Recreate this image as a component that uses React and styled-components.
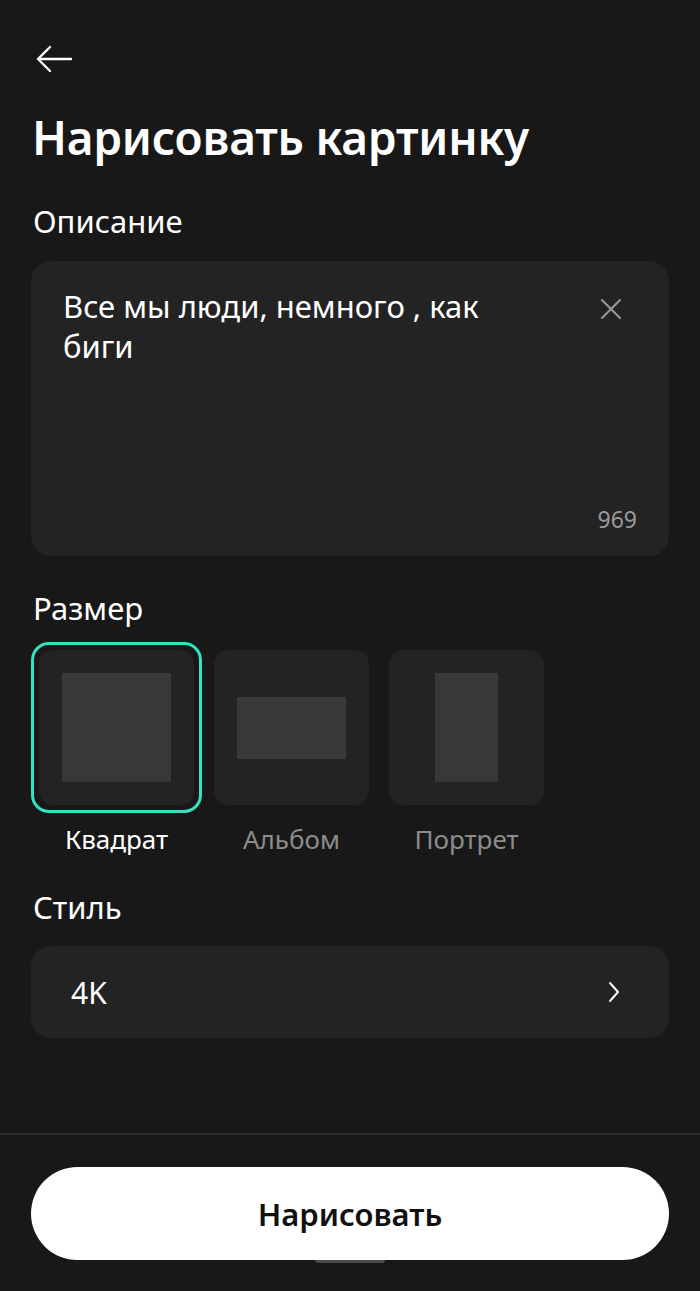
import styled, { createGlobalStyle } from "styled-components";

const Global = createGlobalStyle`
    body{
        margin: 0;
        background-color: #181818;
        font-family: "Noto Sans", "Open Sans", sans-serif;
        color: #fff;
    }
`

const sizes = [
    { id: "square", label: "Квадрат", w: 109, h: 109 },
    { id: "album", label: "Альбом", w: 109, h: 62 },
    { id: "portrait", label: "Портрет", w: 63, h: 109 },
]

function App(){
    const selected = "square";

    return(
    <>
    <Global/>
    <Page>
        <Content>
            <BackButton>
                <svg width="38" height="30" viewBox="0 0 38 30" fill="none">
                    <path d="M36 15H3M15 3L3 15L15 27" stroke="#fff" strokeWidth="2.4" strokeLinecap="round" strokeLinejoin="round"/>
                </svg>
            </BackButton>
            <Title>Нарисовать картинку</Title>

            <Label $top={34} $bottom={20}>Описание</Label>
            <TextCard>
                <TextRow>
                    <Prompt>Все мы люди, немного , как биги</Prompt>
                    <ClearButton>
                        <svg width="22" height="22" viewBox="0 0 22 22" fill="none">
                            <path d="M2 2L20 20M20 2L2 20" stroke="#9a9a9a" strokeWidth="2" strokeLinecap="round"/>
                        </svg>
                    </ClearButton>
                </TextRow>
                <Counter>969</Counter>
            </TextCard>

            <Label $top={32} $bottom={14}>Размер</Label>
            <Sizes>
                {sizes.map(item=>{
                    return(
                        <SizeItem key={item.id}>
                            <Cell $active={item.id===selected}>
                                <Tile>
                                    <Shape style={{width:item.w, height:item.h}}/>
                                </Tile>
                            </Cell>
                            <SizeLabel $active={item.id===selected}>{item.label}</SizeLabel>
                        </SizeItem>
                    )
                })}
            </Sizes>

            <Label $top={31} $bottom={19}>Стиль</Label>
            <StyleRow>
                <span>4K</span>
                <svg width="14" height="22" viewBox="0 0 14 22" fill="none">
                    <path d="M3 2L11 11L3 20" stroke="#fff" strokeWidth="2" strokeLinecap="round" strokeLinejoin="round"/>
                </svg>
            </StyleRow>
        </Content>

        <Footer>
            <DrawButton>Нарисовать</DrawButton>
            <HomeBar/>
        </Footer>
    </Page>
    </>
    )
}

const Page = styled.div`
    display: flex;
    flex-direction: column;
    height: 1291px;
    background-color: #181818;
`
const Content = styled.div`
    flex: 1;
    display: flex;
    flex-direction: column;
    padding: 0 31px;
`
const BackButton = styled.div`
    display: flex;
    align-items: center;
    height: 30px;
    margin-top: 44px;
    margin-left: 4px;
`
const Title = styled.h1`
    margin: 33px 0 0 1px;
    font-size: 46px;
    font-weight: 600;
    line-height: 60px;
    letter-spacing: -0.2px;
`
const Label = styled.h3`
    margin: ${p => p.$top}px 0 ${p => p.$bottom}px 2px;
    font-size: 31px;
    font-weight: 400;
    line-height: 40px;
`
const TextCard = styled.div`
    display: flex;
    flex-direction: column;
    justify-content: space-between;
    height: 295px;
    box-sizing: border-box;
    padding: 25px 32px 22px 32px;
    border-radius: 20px;
    background-color: #232323;
`
const TextRow = styled.div`
    display: flex;
    justify-content: space-between;
    align-items: flex-start;
`
const Prompt = styled.p`
    margin: 0;
    width: 470px;
    font-size: 31px;
    line-height: 40px;
`
const ClearButton = styled.div`
    margin-top: 12px;
    margin-right: 15px;
`
const Counter = styled.span`
    align-self: flex-end;
    font-size: 23px;
    line-height: 30px;
    color: #9a9a9a;
`
const Sizes = styled.div`
    display: flex;
    gap: 4px;
`
const SizeItem = styled.div`
    display: flex;
    flex-direction: column;
    align-items: center;
    width: 171px;
`
const Cell = styled.div`
    width: 171px;
    height: 171px;
    box-sizing: border-box;
    padding: 5px;
    border-radius: 18px;
    border: 3px solid ${p => p.$active ? "#34e2c0" : "transparent"};
`
const Tile = styled.div`
    display: flex;
    align-items: center;
    justify-content: center;
    width: 100%;
    height: 100%;
    border-radius: 14px;
    background-color: #232323;
`
const Shape = styled.div`
    background-color: #383838;
`
const SizeLabel = styled.span`
    margin-top: 9px;
    font-size: 26px;
    line-height: 34px;
    color: ${p => p.$active ? "#fff" : "#8c8c8c"};
`
const StyleRow = styled.div`
    display: flex;
    align-items: center;
    justify-content: space-between;
    height: 92px;
    padding: 0 48px 0 40px;
    border-radius: 20px;
    background-color: #232323;
    font-size: 30px;
`
const Footer = styled.div`
    position: relative;
    display: flex;
    flex-direction: column;
    align-items: center;
    padding: 32px 31px 31px 31px;
    border-top: 2px solid #2c2c2c;
`
const DrawButton = styled.button`
    position: relative;
    z-index: 1;
    width: 100%;
    height: 93px;
    border: none;
    border-radius: 47px;
    background-color: #fff;
    color: #111;
    font-family: "Noto Sans", sans-serif;
    font-size: 31px;
    font-weight: 600;
`
const HomeBar = styled.div`
    position: absolute;
    bottom: 28px;
    width: 70px;
    height: 6px;
    border-radius: 3px;
    background-color: #4a4a4a;
`

export default App;
